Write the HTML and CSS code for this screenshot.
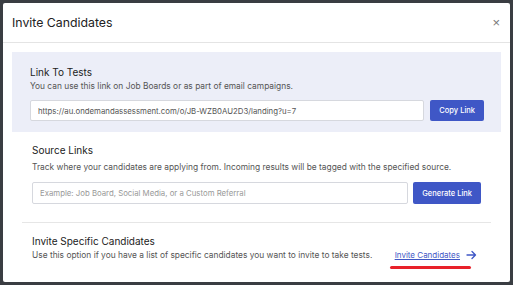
FILE: index.html
```html
<!DOCTYPE html>
<html lang="en">

<head>
    <meta charset="UTF-8">
    <meta name="viewport" content="width=device-width, initial-scale=1.0">
    <title>Invite Candidates</title>
    <link rel="stylesheet" href="styles.css">
</head>

<body>
    <div class="modal">
        <div class="modal-header">
            <h1>Invite Candidates</h1>
            <button class="close-button">&times;</button>
        </div>

        <div class="modal-body">
            <div class="link-panel">
                <h2>Link To Tests</h2>
                <p>You can use this link on Job Boards or as part of email campaigns.</p>
                <div class="field-row">
                    <input class="text-input" type="text" value="https://au.ondemandassessment.com/o/JB-WZB0AU2D3/landing?u=7" readonly>
                    <button class="primary-button">Copy Link</button>
                </div>
            </div>

            <div class="source-section">
                <h2>Source Links</h2>
                <p>Track where your candidates are applying from. Incoming results will be tagged with the specified source.</p>
                <div class="field-row">
                    <input class="text-input" type="text" placeholder="Example: Job Board, Social Media, or a Custom Referral">
                    <button class="primary-button">Generate Link</button>
                </div>
            </div>

            <div class="invite-section">
                <div class="invite-text">
                    <h2>Invite Specific Candidates</h2>
                    <p>Use this option if you have a list of specific candidates you want to invite to take tests.</p>
                </div>
                <a class="invite-link" href="#">
                    <span class="invite-label">Invite Candidates</span>
                    <svg width="11" height="10" viewBox="0 0 11 10"><path d="M1 5h8.5M6 1.5L9.5 5 6 8.5" fill="none" stroke="#3f57c6" stroke-width="1.3" stroke-linecap="round" stroke-linejoin="round"/></svg>
                </a>
            </div>
        </div>
    </div>
</body>

</html>
```

FILE: styles.css
```css
body {
    margin: 0;
    padding: 3px;
    background-color: #3a3d42;
    font-family: Inter, "Noto Sans", sans-serif;
    color: #333;
}

.modal {
    background-color: #fff;
    height: 279px;
    box-sizing: border-box;
    border-radius: 2px;
}

.modal-header {
    display: flex;
    align-items: center;
    justify-content: space-between;
    height: 39px;
    padding: 0 10px 0 9px;
    border-bottom: 1px solid #e4e4e4;
}

.modal-header h1 {
    margin: 0;
    font-size: 12.3px;
    font-weight: 400;
    color: #222;
}

.close-button {
    background: none;
    border: none;
    padding: 0;
    font-size: 13px;
    color: #777;
    cursor: pointer;
}

.modal-body {
    padding: 9px 9px 0 9px;
}

h2 {
    margin: 0;
    font-size: 10px;
    font-weight: 400;
    color: #222;
}

p {
    margin: 3px 0 0 0;
    font-size: 8.4px;
    color: #555;
}

.link-panel {
    background-color: #eceef8;
    padding: 14px 17px 11px 18px;
}

.field-row {
    display: flex;
    gap: 6px;
    margin-top: 9px;
}

.text-input {
    flex: 1;
    height: 21px;
    box-sizing: border-box;
    border: 1px solid #d6d8de;
    border-radius: 2px;
    background-color: #fff;
    padding: 0 7px;
    font-family: Inter, sans-serif;
    font-size: 7.8px;
    color: #555;
}

.text-input::placeholder {
    color: #999;
}

.primary-button {
    height: 21px;
    padding: 0 9px;
    border: none;
    border-radius: 2px;
    background-color: #3f57c6;
    color: #fff;
    font-family: Inter, sans-serif;
    font-size: 7.5px;
    font-weight: 500;
    cursor: pointer;
}

.source-section {
    padding: 12px 10px 18px 10px;
    margin: 0 10px;
    border-bottom: 1px solid #e6e6e6;
}

.source-section p {
    margin-top: 6px;
}

.source-section .field-row {
    margin-top: 10px;
    gap: 5px;
}

.source-section .text-input,
.source-section .primary-button {
    height: 22px;
}

.invite-section {
    display: flex;
    align-items: flex-end;
    justify-content: space-between;
    padding: 12px 24px 0 20px;
}

.invite-link {
    display: flex;
    align-items: center;
    gap: 6px;
    color: #3f57c6;
    font-size: 8px;
    text-decoration: none;
    position: relative;
}

.invite-label {
    text-decoration: underline;
}

.invite-link::after {
    content: "";
    position: absolute;
    left: -5px;
    right: 6px;
    bottom: -9px;
    height: 3px;
    border-radius: 2px;
    background-color: #e8212a;
}
```
